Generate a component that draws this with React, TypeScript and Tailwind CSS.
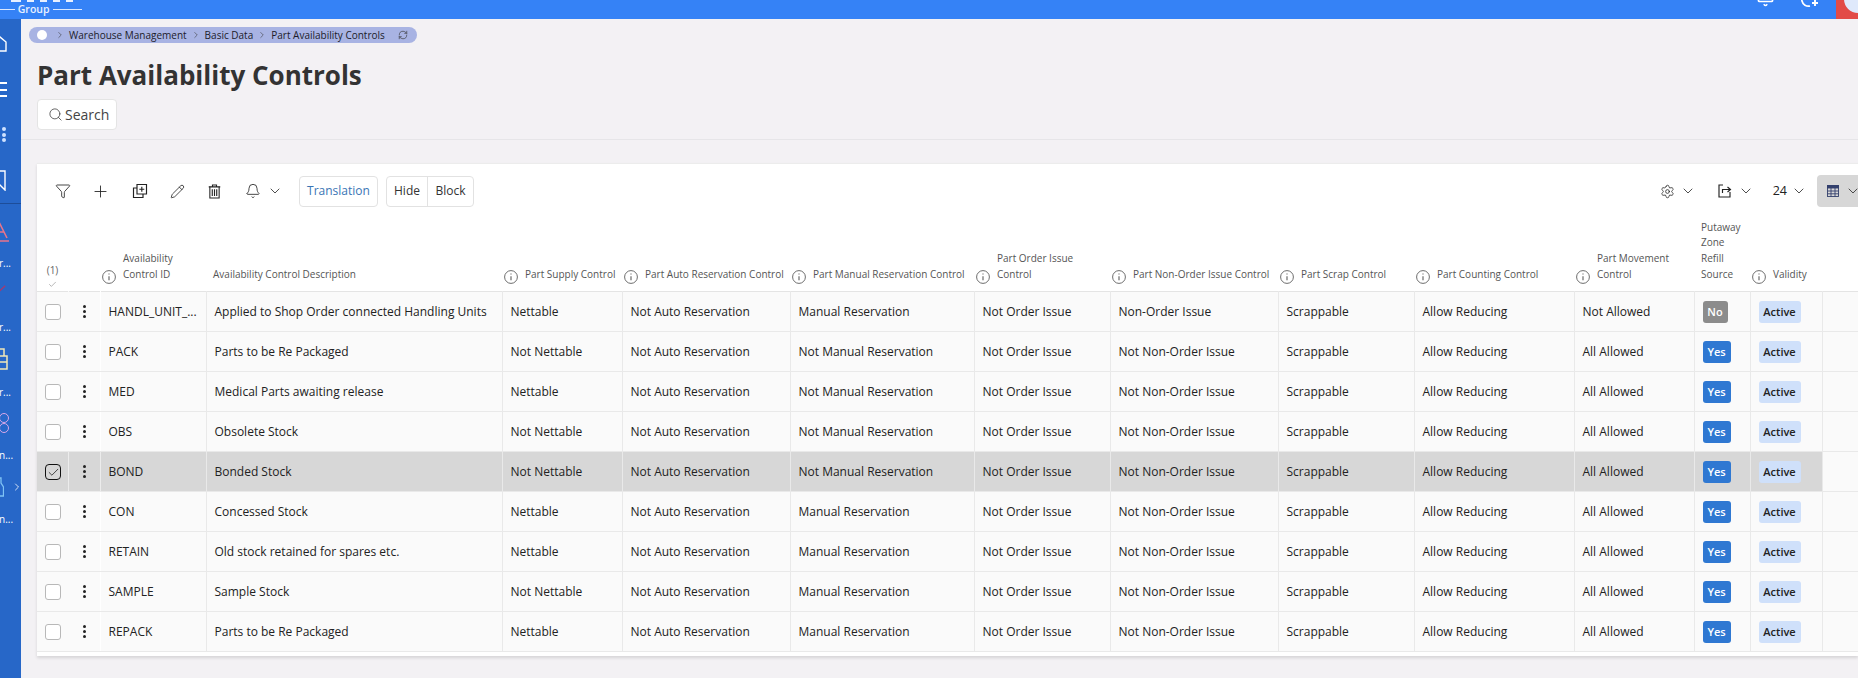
import React from "react";
import { Bell, Check, ChevronDown, ChevronRight, Funnel, Pencil, Plus, RefreshCw, Search, Settings } from "lucide-react";

type Row = [string, string, string, string, string, string, string, string, string, string, boolean, boolean?];

const rows: Row[] = [
  ["HANDL_UNIT_...", "Applied to Shop Order connected Handling Units", "Nettable", "Not Auto Reservation", "Manual Reservation", "Not Order Issue", "Non-Order Issue", "Scrappable", "Allow Reducing", "Not Allowed", false],
  ["PACK", "Parts to be Re Packaged", "Not Nettable", "Not Auto Reservation", "Not Manual Reservation", "Not Order Issue", "Not Non-Order Issue", "Scrappable", "Allow Reducing", "All Allowed", true],
  ["MED", "Medical Parts awaiting release", "Nettable", "Not Auto Reservation", "Not Manual Reservation", "Not Order Issue", "Not Non-Order Issue", "Scrappable", "Allow Reducing", "All Allowed", true],
  ["OBS", "Obsolete Stock", "Not Nettable", "Not Auto Reservation", "Not Manual Reservation", "Not Order Issue", "Not Non-Order Issue", "Scrappable", "Allow Reducing", "All Allowed", true],
  ["BOND", "Bonded Stock", "Not Nettable", "Not Auto Reservation", "Not Manual Reservation", "Not Order Issue", "Not Non-Order Issue", "Scrappable", "Allow Reducing", "All Allowed", true, true],
  ["CON", "Concessed Stock", "Nettable", "Not Auto Reservation", "Manual Reservation", "Not Order Issue", "Not Non-Order Issue", "Scrappable", "Allow Reducing", "All Allowed", true],
  ["RETAIN", "Old stock retained for spares etc.", "Nettable", "Not Auto Reservation", "Manual Reservation", "Not Order Issue", "Not Non-Order Issue", "Scrappable", "Allow Reducing", "All Allowed", true],
  ["SAMPLE", "Sample Stock", "Not Nettable", "Not Auto Reservation", "Manual Reservation", "Not Order Issue", "Not Non-Order Issue", "Scrappable", "Allow Reducing", "All Allowed", true],
  ["REPACK", "Parts to be Re Packaged", "Nettable", "Not Auto Reservation", "Manual Reservation", "Not Order Issue", "Not Non-Order Issue", "Scrappable", "Allow Reducing", "All Allowed", true],
];

const colClasses = [
  "w-[31px]", "w-[32px]", "w-[106px]", "w-[296px]", "w-[120px]", "w-[168px]", "w-[184px]",
  "w-[136px]", "w-[168px]", "w-[136px]", "w-[160px]", "w-[120px]", "w-[56px]", "w-[72px]", "w-auto",
];

function InfoIcon() {
  return (
    <svg viewBox="0 0 14 14" className="w-[14px] h-[14px] shrink-0 mb-[-1px]" fill="none" stroke="#5c5c5c" strokeWidth="0.9">
      <circle cx="7" cy="7" r="6.4" />
      <path d="M7 6.2V10.2" strokeWidth="1.1" />
      <path d="M7 3.6V4.6" strokeWidth="1.1" />
    </svg>
  );
}

function HeaderCell({ label, info = true }: { label: string; info?: boolean }) {
  return (
    <th className="align-bottom p-0 pb-[8px] font-normal text-left">
      <div className="flex items-end pl-[2px] gap-[7px] text-[10px] leading-[15.7px] text-[#555]">
        {info && <InfoIcon />}
        <span>{label}</span>
      </div>
    </th>
  );
}

function CopyPlus() {
  return (
    <svg viewBox="0 0 16 16" className="w-[16px] h-[16px]" fill="none" stroke="#222" strokeWidth="1.15">
      <path d="M5 1.5H14.5V11H5Z" />
      <path d="M5 5H1.5V14.5H11V11" />
      <path d="M9.8 3.8V8.7M7.3 6.2H12.3" />
    </svg>
  );
}

function TrashIcon() {
  return (
    <svg viewBox="0 0 14 16" className="w-[13px] h-[15px]" fill="none" stroke="#222" strokeWidth="1.15">
      <path d="M0.8 3H13.2M4.8 3V1H9.2V3" />
      <path d="M2 3V15H12V3" />
      <path d="M4.6 5.5V12.8M7 5.5V12.8M9.4 5.5V12.8" strokeWidth="1.2" />
    </svg>
  );
}

function ExportIcon() {
  return (
    <svg viewBox="0 0 14 14" className="w-[14px] h-[14px]" fill="none" stroke="#222" strokeWidth="1.15">
      <path d="M5 1H1V13H12V8" />
      <path d="M4.5 9V5.5H12M9.5 3L12.5 5.5L9.5 8" />
    </svg>
  );
}

function GridIcon() {
  return (
    <svg viewBox="0 0 12 12" className="w-[12px] h-[12px] shrink-0" fill="none" stroke="#33406d" strokeWidth="0.9">
      <rect x="0.5" y="0.5" width="11" height="11" />
      <rect x="0.5" y="0.5" width="11" height="2.5" fill="#33406d" />
      <path d="M0.5 6H11.5M0.5 8.8H11.5M4 3V11.5M8 3V11.5" />
    </svg>
  );
}

function Chevron({ className = "" }: { className?: string }) {
  return <ChevronDown className={"w-[16px] h-[16px] shrink-0 text-[#333] " + className} strokeWidth={1.3} />;
}

function SideLabel({ text }: { text: string }) {
  return <div className="text-white text-[10px] leading-[12px] -ml-[1px] whitespace-nowrap h-[12px]">{text}</div>;
}

function Sidebar() {
  return (
    <aside className="w-[21px] h-[659px] bg-[#2767c8] overflow-hidden shrink-0 flex flex-col items-start">
      <svg viewBox="0 0 20 20" className="w-[20px] h-[20px] mt-[14px] -ml-[13px] shrink-0" fill="none" stroke="#fff" strokeWidth="1.4">
        <path d="M1 9L10 1.5L19 9V18H1V9" />
      </svg>
      <div className="mt-[29px] -ml-[4px] w-[11px] h-[15px] flex flex-col justify-between shrink-0">
        <div className="h-[2px] bg-white" />
        <div className="h-[2px] bg-white" />
        <div className="h-[2px] bg-white" />
      </div>
      <div className="mt-[30px] ml-[2px] h-[15px] flex flex-col justify-between shrink-0">
        <div className="w-[4px] h-[4px] rounded-full bg-[#cfe2ff]" />
        <div className="w-[4px] h-[4px] rounded-full bg-[#cfe2ff]" />
        <div className="w-[4px] h-[4px] rounded-full bg-[#cfe2ff]" />
      </div>
      <svg viewBox="0 0 14 21" className="w-[14px] h-[21px] mt-[28px] -ml-[8px] shrink-0" fill="none" stroke="#fff" strokeWidth="1.4">
        <path d="M1 1H13V20L7 14L1 20Z" />
      </svg>
      <div className="w-full h-[1px] bg-[#1d4d99] mt-[12px] shrink-0" />
      <svg viewBox="0 0 20 22" className="w-[20px] h-[22px] mt-[16px] -ml-[11px] shrink-0" fill="none" stroke="#e8748a" strokeWidth="1.6">
        <path d="M2 18L10 2L18 18M5 12H15M0 21H20" />
      </svg>
      <div className="mt-[15px] shrink-0"><SideLabel text="r..." /></div>
      <svg viewBox="0 0 12 12" className="w-[10px] h-[10px] mt-[16px] -ml-[4px] shrink-0" fill="none" stroke="#a8386e" strokeWidth="1.6">
        <path d="M0 11L11 1" />
      </svg>
      <div className="mt-[26px] shrink-0"><SideLabel text="r..." /></div>
      <svg viewBox="0 0 18 22" className="w-[18px] h-[22px] mt-[15px] -ml-[10px] shrink-0" fill="none" stroke="#f1e8b8" strokeWidth="1.5">
        <path d="M4 8V1H14V8M1 8H17V21H1ZM1 14H17" />
      </svg>
      <div className="mt-[16px] shrink-0"><SideLabel text="r..." /></div>
      <div className="mt-[15px] -ml-[1px] flex flex-col shrink-0">
        <div className="w-[10px] h-[10px] rounded-full border-[1.5px] border-[#d9a8e8]" />
        <div className="w-[10px] h-[10px] rounded-full border-[1.5px] border-[#d9a8e8]" />
      </div>
      <div className="mt-[16px] shrink-0"><SideLabel text="n..." /></div>
      <div className="flex items-center mt-[16px] -ml-[6px] shrink-0">
        <svg viewBox="0 0 10 20" className="w-[10px] h-[20px] shrink-0" fill="none" stroke="#7fc3f5" strokeWidth="1.3">
          <path d="M3.5 1H7V6L9.5 10V19H0.5V10L3.5 6Z" />
        </svg>
        <ChevronRight className="w-[12px] h-[12px] text-white ml-[7px] shrink-0" strokeWidth={1.6} />
      </div>
      <div className="mt-[16px] shrink-0"><SideLabel text="n..." /></div>
    </aside>
  );
}

function TopBar() {
  return (
    <header className="h-[19px] bg-[#3582f6] flex items-start overflow-hidden relative">
      <div className="w-[82px] shrink-0 h-full flex flex-col">
        <div className="flex gap-[6px] ml-[11px] h-[2px]">
          <div className="w-[10px] h-full bg-[#e8f0ff]" />
          <div className="w-[7px] h-full bg-[#e8f0ff]" />
          <div className="w-[7px] h-full bg-[#e8f0ff]" />
          <div className="w-[7px] h-full bg-[#e8f0ff]" />
          <div className="w-[7px] h-full bg-[#e8f0ff]" />
        </div>
        <div className="flex items-center h-[13px] mt-[1px]">
          <div className="w-[16px] h-[1px] bg-[#dbe8ff]" />
          <span className="text-[#e8f0ff] text-[10.5px] font-semibold leading-[13px] mx-[3px]">Group</span>
          <div className="w-[32px] h-[1px] bg-[#dbe8ff]" />
        </div>
      </div>
      <div className="flex-1" />
      <Bell className="w-[19px] h-[19px] text-white -mt-[12px] mr-[23px] shrink-0" strokeWidth={1.9} />
      <div className="mr-[16px] -mt-[8px] flex items-end shrink-0">
        <svg viewBox="0 0 22 16" className="w-[22px] h-[16px]" fill="none" stroke="#fff" strokeWidth="1.7">
          <path d="M9 1A6.5 6.5 0 1 0 12 14" />
          <path d="M17 8V14M14 11H20" strokeWidth="1.9" />
        </svg>
      </div>
      <div className="w-[22px] h-[19px] bg-[#e24b47] shrink-0 overflow-hidden">
        <div className="w-[28px] h-[28px] rounded-full bg-[#dfe9fb] ml-[8px] -mt-[15px]" />
      </div>
    </header>
  );
}

function Toolbar() {
  return (
    <div className="h-[54px] flex items-center pl-[19px]">
      <div className="w-[14px] flex justify-center"><Funnel className="w-[16px] h-[16px] shrink-0 text-[#222]" strokeWidth={1.25} /></div>
      <Plus className="w-[19px] h-[19px] text-[#222] ml-[21px] shrink-0" strokeWidth={1.1} />
      <div className="ml-[22px]"><CopyPlus /></div>
      <Pencil className="w-[15px] h-[15px] text-[#222] ml-[22px] shrink-0" strokeWidth={1.3} />
      <div className="ml-[23px]"><TrashIcon /></div>
      <Bell className="w-[16px] h-[16px] text-[#222] ml-[24px] shrink-0" strokeWidth={1.25} />
      <Chevron className="ml-[6px]" />
      <button className="ml-[16px] w-[79px] h-[31px] border border-[#e2e2e2] rounded-[4px] bg-white text-[12px] text-[#3a75b5]">Translation</button>
      <div className="ml-[8px] h-[31px] w-[88px] flex border border-[#e2e2e2] rounded-[4px] bg-white text-[12px] text-[#333]">
        <button className="w-[41px] border-r border-[#e2e2e2]">Hide</button>
        <button className="flex-1">Block</button>
      </div>
      <div className="flex-1" />
      <Settings className="w-[15px] h-[15px] text-[#222] shrink-0" strokeWidth={1.25} />
      <Chevron className="ml-[5px]" />
      <div className="ml-[22px]"><ExportIcon /></div>
      <Chevron className="ml-[6px]" />
      <span className="ml-[19px] text-[12.5px] text-[#222]">24</span>
      <Chevron className="ml-[4px]" />
      <div className="ml-[10px] w-[41px] h-[32px] bg-[#d7d7d7] rounded-l-[4px] flex items-center pl-[10px] gap-[6px] shrink-0 overflow-hidden">
        <GridIcon />
        <Chevron />
      </div>
    </div>
  );
}

function DotsMenu() {
  return (
    <div className="flex flex-col items-center gap-[2px]">
      <div className="w-[3px] h-[3px] rounded-full bg-[#222]" />
      <div className="w-[3px] h-[3px] rounded-full bg-[#222]" />
      <div className="w-[3px] h-[3px] rounded-full bg-[#222]" />
    </div>
  );
}

function DataRow({ row }: { row: Row }) {
  const selected = !!row[11];
  const bg = selected ? "bg-[#d7d7d7]" : "bg-[#fafafa]";
  const sep = "border-b border-r border-[#e9e9e9]";
  const soft = selected ? "border-b border-r border-[#ececec]" : "border-b border-r border-b-[#e9e9e9] border-r-transparent";
  const texts = row.slice(0, 10) as string[];
  return (
    <tr className="h-[40px]">
      <td className={`${bg} ${soft} p-0 pt-[2px] pl-[8px]`}>
        {selected ? (
          <div className="w-[16px] h-[16px] rounded-[4px] border border-[#111] flex items-center justify-center">
            <Check className="w-[13px] h-[13px] text-[#222]" strokeWidth={1.5} />
          </div>
        ) : (
          <div className="w-[16px] h-[16px] rounded-[3px] border border-[#b8b8b8] bg-white" />
        )}
      </td>
      <td className={`${bg} ${soft} p-0 pt-[1px]`}>
        <DotsMenu />
      </td>
      {texts.map((t, i) => (
        <td key={i} className={`${bg} ${sep} p-0 pt-[2px] pl-[8px] text-[12px] text-[#222] whitespace-nowrap overflow-hidden`}>
          {t}
        </td>
      ))}
      <td className={`${bg} ${sep} p-0 pt-[2px] pl-[8px]`}>
        <div className="flex items-center">
          {row[10] ? (
            <span className="flex items-center justify-center w-[28px] h-[22px] rounded-[3px] bg-[#2f78d2] text-white text-[11px] font-semibold">Yes</span>
          ) : (
            <span className="flex items-center justify-center w-[25px] h-[22px] rounded-[3px] bg-[#8c8c8c] text-white text-[11px] font-semibold">No</span>
          )}
        </div>
      </td>
      <td className={`${bg} ${sep} p-0 pt-[2px] pl-[8px]`}>
        <div className="flex items-center">
          <span className="flex items-center justify-center w-[42px] h-[22px] rounded-[3px] bg-[#cfe0fa] text-[#222] text-[11px] font-semibold">Active</span>
        </div>
      </td>
      <td className="bg-[#fafafa] border-b border-[#e9e9e9] p-0" />
    </tr>
  );
}

function DataTable() {
  return (
    <table className="table-fixed w-full border-collapse">
      <colgroup>
        {colClasses.map((c, i) => (
          <col key={i} className={c} />
        ))}
      </colgroup>
      <thead>
        <tr className="h-[73px] border-b border-[#e4e4e4]">
          <th className="align-bottom p-0 font-normal">
            <div className="flex flex-col items-center text-[10px] leading-[12px] text-[#666] pb-[2px]">
              <span>(1)</span>
              <Check className="w-[9px] h-[9px] mt-[4px] text-[#777]" strokeWidth={1.4} />
            </div>
          </th>
          <th className="p-0" />
          <HeaderCell label="Availability Control ID" />
          <th className="align-bottom p-0 pb-[8px] pl-[7px] font-normal text-left text-[10px] leading-[15.7px] text-[#555]">Availability Control Description</th>
          <HeaderCell label="Part Supply Control" />
          <HeaderCell label="Part Auto Reservation Control" />
          <HeaderCell label="Part Manual Reservation Control" />
          <HeaderCell label="Part Order Issue Control" />
          <HeaderCell label="Part Non-Order Issue Control" />
          <HeaderCell label="Part Scrap Control" />
          <HeaderCell label="Part Counting Control" />
          <HeaderCell label="Part Movement Control" />
          <th className="align-bottom p-0 pb-[8px] pl-[7px] pr-[2px] font-normal text-left text-[10px] leading-[15.7px] text-[#555]">Putaway Zone Refill Source</th>
          <HeaderCell label="Validity" />
          <th className="p-0" />
        </tr>
      </thead>
      <tbody>
        {rows.map((r) => (
          <DataRow key={r[0]} row={r} />
        ))}
      </tbody>
    </table>
  );
}

export default function App() {
  return (
    <div className="w-[1858px] h-[678px] overflow-hidden bg-[#f3f1f4] font-['Open_Sans',sans-serif]">
      <TopBar />
      <div className="flex">
        <Sidebar />
        <main className="flex-1 min-w-0">
          <div className="ml-[8px] mt-[8px] w-[388px] h-[16px] rounded-full bg-[#a8b3e3] flex items-center pl-[8px] text-[10px] text-[#1c1c2a] whitespace-nowrap">
            <div className="w-[10px] h-[10px] rounded-full bg-white shrink-0" />
            <ChevronRight className="w-[10px] h-[10px] ml-[8px] text-[#333] shrink-0" strokeWidth={1.3} />
            <span className="ml-[4px]">Warehouse Management</span>
            <ChevronRight className="w-[10px] h-[10px] ml-[4px] text-[#333] shrink-0" strokeWidth={1.3} />
            <span className="ml-[4px]">Basic Data</span>
            <ChevronRight className="w-[10px] h-[10px] ml-[4px] text-[#333] shrink-0" strokeWidth={1.3} />
            <span className="ml-[4px]">Part Availability Controls</span>
            <RefreshCw className="w-[10px] h-[10px] ml-[13px] text-[#333] shrink-0" strokeWidth={1.5} />
          </div>
          <h1 className="ml-[16px] mt-[13px] text-[26px] leading-[38px] font-bold text-[#333]">Part Availability Controls</h1>
          <button className="ml-[16px] mt-[5px] w-[80px] h-[31px] bg-white border border-[#e4e4e4] rounded-[4px] flex items-center pl-[10px] text-[14px] text-[#444]">
            <Search className="w-[15px] h-[15px] text-[#444] mr-[2px] shrink-0" strokeWidth={1.3} />
            Search
          </button>
          <div className="h-[1px] bg-[#e6e5e8] mt-[9px]" />
          <section className="ml-[16px] mt-[23px] h-[493px] bg-white border-t border-[#ececec] shadow-[0_2px_3px_rgba(0,0,0,0.12)]">
            <Toolbar />
            <DataTable />
          </section>
        </main>
      </div>
    </div>
  );
}
